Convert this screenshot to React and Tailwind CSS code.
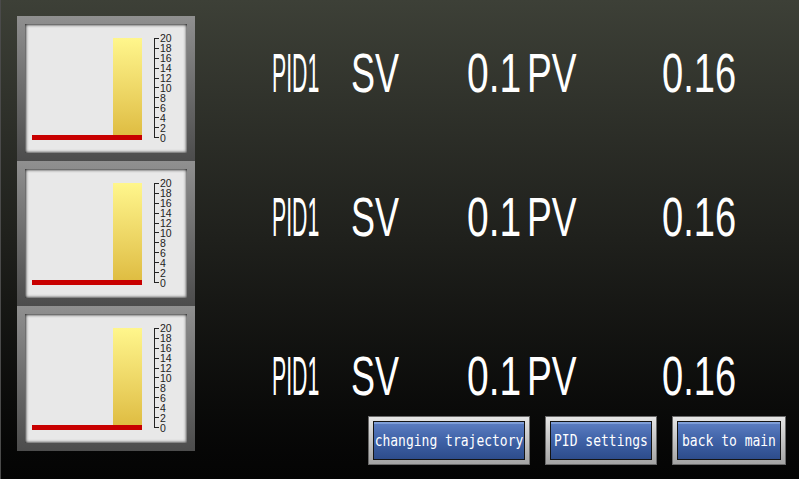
const TICKS = [20, 18, 16, 14, 12, 10, 8, 6, 4, 2, 0];

function Gauge() {
  return (
    <div className="w-[178px] h-[145px] p-[8px] bg-linear-to-b from-[#909090] to-[#4c4c4c]">
      <div className="w-full h-full bg-[#e8e8e8] shadow-[inset_1px_1px_3px_rgba(0,0,0,0.75),inset_-1px_-1px_3px_rgba(0,0,0,0.55)] flex items-start">
        <div className="pl-[7px] pt-[14px] flex flex-col">
          <div className="w-[110px] h-[97px] flex justify-end">
            <div className="w-[29px] h-full bg-linear-to-b from-[#fff68c] to-[#dfbd42]" />
          </div>
          <div className="w-[110px] h-[5px] bg-[#c80000]" />
        </div>
        <div className="ml-[12px] mt-[14px] h-[100px] w-[5px] border-l border-[#222] flex flex-col justify-between">
          {TICKS.map((t) => (
            <div key={t} className="h-px w-[4px] bg-[#222]" />
          ))}
        </div>
        <div className="ml-[1px] mt-[9px] h-[110px] flex flex-col justify-between font-['Liberation_Sans',sans-serif] text-[10.5px] leading-[10px] text-[#222]">
          {TICKS.map((t) => (
            <span key={t} className="h-[10px]">{t}</span>
          ))}
        </div>
      </div>
    </div>
  );
}

function Big({ children, sx, w }) {
  return (
    <div className={`${w} h-[30px] shrink-0`}>
      <span className={`inline-block origin-top-left ${sx} scale-y-[1.86] text-[30px] leading-none text-white font-['Liberation_Sans',sans-serif] whitespace-nowrap`}>
        {children}
      </span>
    </div>
  );
}

function Row({ className }) {
  return (
    <div className={`flex h-[30px] pl-[77px] ${className}`}>
      <Big w="w-[79px]" sx="scale-x-[0.71]">PID1</Big>
      <Big w="w-[116px]" sx="scale-x-[1.2]">SV</Big>
      <Big w="w-[60px]" sx="scale-x-[1.3]">0.1</Big>
      <Big w="w-[135px]" sx="scale-x-[1.24]">PV</Big>
      <Big w="w-[80px]" sx="scale-x-[1.27]">0.16</Big>
    </div>
  );
}

function Button({ label, w }) {
  return (
    <div className={`${w} h-[49px] p-[4px] border border-[#6a6a6a] bg-linear-to-b from-[#e6e6e6] to-[#a4a4a4]`}>
      <div className="w-full h-full border border-[#141414] bg-linear-to-b from-[#5d7ec2] via-[#3f62a7] to-[#2d4c8b] shadow-[inset_0_2px_0_rgba(150,180,230,0.6)] flex items-center justify-center">
        <span className="text-white text-[13px] font-['DejaVu_Sans_Mono',monospace] whitespace-nowrap inline-block scale-y-[1.2]">
          {label}
        </span>
      </div>
    </div>
  );
}

export default function App() {
  return (
    <div className="w-[799px] h-[479px] overflow-hidden flex border-l border-[#4a4a4a] bg-linear-to-b from-[#3d4037] via-[#1f201c] to-[#040404]">
      <div className="pl-[16px] pt-[16px] flex flex-col">
        <Gauge />
        <Gauge />
        <Gauge />
      </div>
      <div className="flex-1 flex flex-col pt-[45px]">
        <Row />
        <Row className="mt-[114px]" />
        <Row className="mt-[129px]" />
        <div className="mt-[38px] flex pl-[173px] gap-[15px]">
          <Button label="changing trajectory" w="w-[162px]" />
          <Button label="PID settings" w="w-[112px]" />
          <Button label="back to main" w="w-[114px]" />
        </div>
      </div>
    </div>
  );
}
